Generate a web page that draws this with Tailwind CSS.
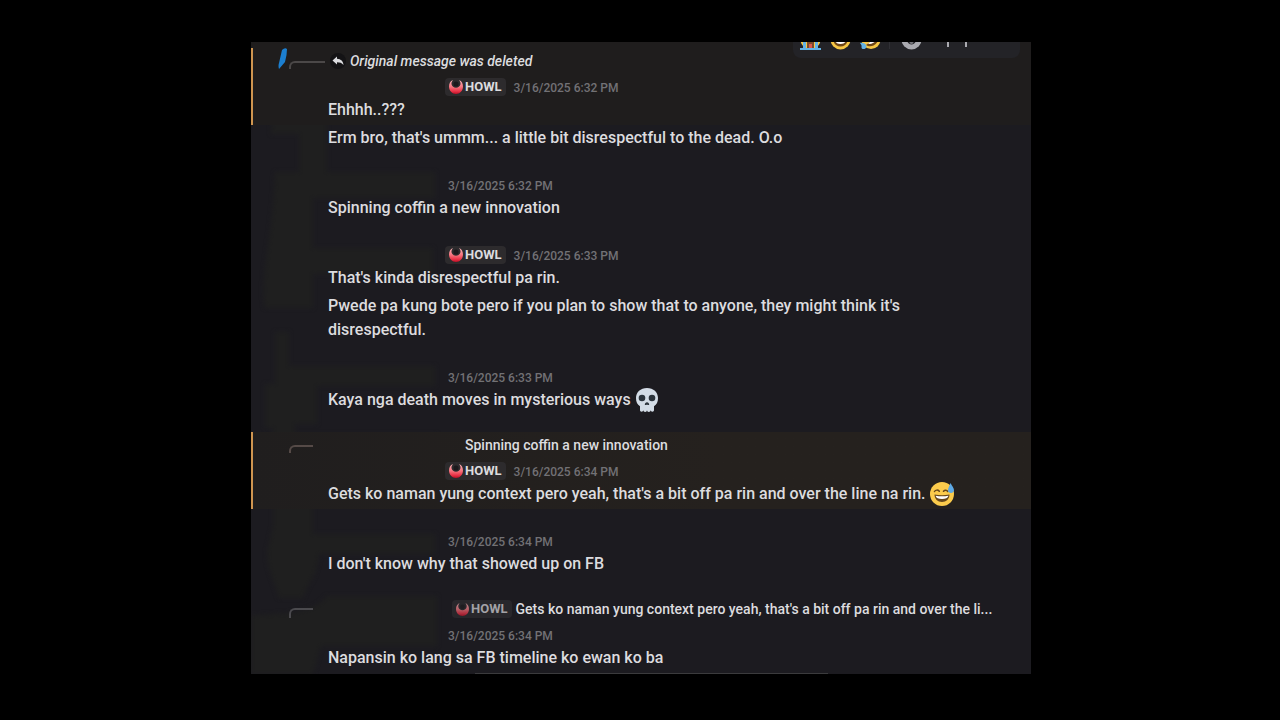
<!DOCTYPE html>
<html lang="en">
<head>
  <meta charset="UTF-8" />
  <meta name="viewport" content="width=device-width, initial-scale=1.0" />
  <title>Chat</title>
  <script src="https://cdn.jsdelivr.net/npm/@tailwindcss/browser@4"></script>
</head>
<body class="bg-black pl-[2px] font-['Roboto','Noto_Sans',sans-serif] text-[#dcdcdf]">

  <!-- Shared icons -->
  <svg class="absolute size-0" aria-hidden="true">
    <defs>
      <linearGradient id="horn" x1="0" y1="0" x2="0" y2="1">
        <stop offset="0" stop-color="#f9b4b8" />
        <stop offset="0.5" stop-color="#f4737d" />
        <stop offset="0.8" stop-color="#ea3347" />
        <stop offset="1" stop-color="#b80f26" />
      </linearGradient>
    </defs>
    <symbol id="tag" viewBox="0 0 14 14">
      <circle cx="7" cy="4" r="2.500" fill="#1b191c" />
      <path fill="url(#horn)" d="M4 0C1.200 1.200 0 3.500 0 6.500 0 10.700 3.200 14 7 14s7-3.300 7-7.500c0-3-1.200-5.300-4-6.500 1.300 1.500 1.800 3 1.400 4.600C10.900 6.500 9.200 7.700 7 7.700S3.100 6.500 2.600 4.600C2.200 3 2.700 1.500 4 0z" />
    </symbol>
  </svg>

  <main class="relative isolate mx-auto mt-[42px] max-w-[780px] overflow-hidden bg-[#1c1b20]">

    <!-- Message actions, partly scrolled out of view -->
    <div class="absolute -top-4 right-[11px] z-30 flex h-8 w-[227px] items-center rounded-lg bg-[#232327] pb-[6px] pl-[7px]">
      <button aria-label="Crying" class="mr-[9px]">
        <svg class="size-[21px]" viewBox="0 0 21 21">
          <circle cx="10.500" cy="10.500" r="10" fill="#f6c644" />
          <path fill="#7b4a2a" d="M7 12h7v7H7z" />
          <path fill="#d9584a" d="M9 15h3v4H9z" />
          <path fill="#63b2e4" d="M3 8h3v13H3zM15 8h3v13h-3zM0 19h21v2H0z" />
        </svg>
      </button>
      <button aria-label="Smile" class="mr-[9px]">
        <svg class="size-[21px]" viewBox="0 0 21 21">
          <circle cx="10.500" cy="10.500" r="10" fill="#f6c644" />
          <path fill="#6b4316" d="M3.500 10.500h14c0 4.500-3 7-7 7s-7-2.500-7-7z" />
          <path fill="#fff" d="M5 11h11c0 2-2 4-5.500 4S5 13 5 11z" />
        </svg>
      </button>
      <button aria-label="Rolling laugh" class="mr-2">
        <svg class="size-[21px]" viewBox="0 0 21 21">
          <circle cx="11" cy="10.500" r="9.500" fill="#f6c644" />
          <path fill="#6b4316" d="M6 16L17.500 8c1.500 4-1 7-4 8.500-2.500 1.200-5.500 1-7.500-.5z" />
          <path fill="#fff" d="M8 14.500L16 9c.5 2.500-1 4-3 5s-3.500 1.300-5 .5z" />
          <path fill="#63b2e4" d="M0 14c2-.5 5 0 6 2s0 4-2.500 4C2 20 1.500 19.500 1.500 18 2 17 1 15 0 14z" />
        </svg>
      </button>
      <span class="mr-[11px] h-5 w-px bg-[#303035]"></span>
      <button aria-label="Add reaction" class="mr-6">
        <svg class="size-[21px]" viewBox="0 0 21 21">
          <circle cx="10.500" cy="10.500" r="10" fill="#aaaab0" />
          <path fill="#232327" d="M6 11h9c-.5 3-2 4.500-4.500 4.500S6.500 14 6 11z" />
          <circle cx="10.500" cy="13" r="2" fill="#77777d" />
        </svg>
      </button>
      <button aria-label="Edit">
        <svg class="size-[22px]" viewBox="0 0 22 22" fill="none" stroke="#aaaab0" stroke-width="2">
          <path d="M2 19V9h18v10" />
        </svg>
      </button>
    </div>

    <!-- Brushed-out avatars and names -->
    <svg class="pointer-events-none absolute inset-0 z-10 h-[632px] w-[200px] blur-[2px]" viewBox="0 0 200 632" fill="#1f1f1f" aria-hidden="true">
      <path d="M24 36h160v18H76v76H48V92H20z" />
      <path d="M24 130h160v26H62v50h120v26H62v34H14c-6-30 8-70 10-136z" />
      <path d="M24 290h14v34h146v20H66v38H44v10h142v50H62v50h122v20H68c-2 24-12 30-16 44H28c-6-20-12-30-12-46l6-26V386H14v-44h10z" />
      <path d="M0 574c30-4 60 0 76-20h110v50H70l-8 28H0z" />
    </svg>

    <ol class="relative z-20 pt-[6px]">
      <li class="border-l-2 border-[#cf9550] bg-[#1f1d1d] pt-[2px] pr-12 pb-[3px] pl-[75px] shadow-[0_-6px_0_#1f1d1d]">
        <div class="-ml-[51px] mb-1 flex h-[22px] items-center text-[14px] font-medium leading-[22px]">
          <svg class="mb-1 h-[22px] w-3" viewBox="0 0 12 22" aria-hidden="true">
            <path d="M5 2q3-3 5-1 0 6-2 13l-6 7q-1-3 0-6z" fill="#1c7fd0" />
          </svg>
          <span class="mt-2 mr-[5px] h-2 w-9 rounded-tl-md border-t-2 border-l-2 border-[#4b4848]"></span>
          <span class="mr-1 flex size-4 items-center justify-center rounded-full bg-[#141315]">
            <svg class="size-3" viewBox="0 0 12 12" fill="#dcdcdf" aria-hidden="true">
              <path d="M5 1.500L.5 5.500 5 9.500V7.200c3 0 4.800.6 6.500 2.800C11.300 6.500 9 4 5 3.800z" />
            </svg>
          </span>
          <em>Original message was deleted</em>
        </div>
        <div class="flex h-[22px] items-center pl-[117px]">
          <span class="mr-2 flex h-[18px] items-center gap-[2px] rounded bg-[#2d2b2d] px-1 text-[13px] font-bold"><svg class="size-[14px]" aria-hidden="true"><use href="#tag" /></svg>HOWL</span>
          <time class="pt-[2px] text-[12px] font-medium text-[#727175]">3/16/2025 6:32 PM</time>
        </div>
        <p class="text-[16px] font-medium leading-6">Ehhhh..???</p>
      </li>
      <li class="pt-px pr-12 pb-[3px] pl-[77px]">
        <p class="text-[16px] font-medium leading-6">Erm bro, that's ummm... a little bit disrespectful to the dead. O.o</p>
      </li>

      <li class="mt-[19px] pt-[2px] pr-12 pb-[3px] pl-[77px]">
        <div class="flex h-[22px] items-center pl-[120px]">
          <time class="pt-[2px] text-[12px] font-medium text-[#727175]">3/16/2025 6:32 PM</time>
        </div>
        <p class="text-[16px] font-medium leading-6">Spinning coffin a new innovation</p>
      </li>

      <li class="mt-[19px] pt-[2px] pr-12 pb-[3px] pl-[77px]">
        <div class="flex h-[22px] items-center pl-[117px]">
          <span class="mr-2 flex h-[18px] items-center gap-[2px] rounded bg-[#2d2b2d] px-1 text-[13px] font-bold"><svg class="size-[14px]" aria-hidden="true"><use href="#tag" /></svg>HOWL</span>
          <time class="pt-[2px] text-[12px] font-medium text-[#727175]">3/16/2025 6:33 PM</time>
        </div>
        <p class="text-[16px] font-medium leading-6">That's kinda disrespectful pa rin.</p>
      </li>
      <li class="pt-px pr-12 pb-[3px] pl-[77px]">
        <p class="text-[16px] font-medium leading-6">Pwede pa kung bote pero if you plan to show that to anyone, they might think it's disrespectful.</p>
      </li>

      <li class="mt-[19px] pt-[2px] pr-12 pb-[3px] pl-[77px]">
        <div class="flex h-[22px] items-center pl-[120px]">
          <time class="pt-[2px] text-[12px] font-medium text-[#727175]">3/16/2025 6:33 PM</time>
        </div>
        <p class="flex min-h-6 items-center gap-1 text-[16px] font-medium leading-6">Kaya nga death moves in mysterious ways
          <svg class="size-6 shrink-0" viewBox="0 0 24 24" role="img" aria-label="skull">
            <path fill="#d3dce6" d="M12 0C5.500 0 1 4.300 1 10c0 4 1.300 6.700 4 8.200V22c0 1 .6 1.700 1.600 1.700S8.300 23 8.300 22c0 1 .8 2 1.900 2s1.800-1 1.800-2c0 1 .7 2 1.800 2s1.900-1 1.900-2c0 1 .7 1.700 1.700 1.700S19 23 19 22v-3.800c2.700-1.500 4-4.200 4-8.200C23 4.300 18.500 0 12 0z" />
            <circle cx="7" cy="10" r="3.300" fill="#2b333b" />
            <circle cx="17" cy="10" r="3.300" fill="#2b333b" />
            <path fill="#2b333b" d="M12 14.300c-1.200 0-2.200 1.300-2.200 2.200 0 .8 1.500.6 2.200 0 .7.6 2.200.8 2.200 0 0-.9-1-2.200-2.200-2.200z" />
          </svg>
        </p>
      </li>

      <li class="mt-[17px] border-l-2 border-[#cf9550] bg-linear-to-r from-[#201e1e] to-[#25211e] to-60% pt-[2px] pr-12 pb-[3px] pl-[75px]">
        <div class="-ml-[39px] mb-1 flex h-[22px] items-center text-[14px] font-medium leading-[22px]">
          <span class="mt-2 h-2 w-6 rounded-tl-md border-t-2 border-l-2 border-[#554a47]"></span>
          <span class="pl-[152px]">Spinning coffin a new innovation</span>
        </div>
        <div class="flex h-[22px] items-center pl-[117px]">
          <span class="mr-2 flex h-[18px] items-center gap-[2px] rounded bg-[#2d2b2d] px-1 text-[13px] font-bold"><svg class="size-[14px]" aria-hidden="true"><use href="#tag" /></svg>HOWL</span>
          <time class="pt-[2px] text-[12px] font-medium text-[#727175]">3/16/2025 6:34 PM</time>
        </div>
        <p class="flex min-h-6 items-center gap-1 text-[16px] font-medium leading-6">Gets ko naman yung context pero yeah, that's a bit off pa rin and over the line na rin.
          <svg class="size-6 shrink-0" viewBox="0 0 24 24" role="img" aria-label="sweat smile">
            <circle cx="12" cy="12" r="12" fill="#fbcb4c" />
            <path fill="none" stroke="#65471b" stroke-width="1.500" stroke-linecap="round" stroke-linejoin="round" d="M4.500 9.500c1-1.800 3.500-1.800 4.800-.2M13.500 9.300c1.300-1.600 3.300-1.400 4.300.2" />
            <path fill="#65471b" d="M4.500 12.500c5 1 10 1 15 0 0 4.500-3.200 7.500-7.500 7.500s-7.500-3-7.500-7.500z" />
            <path fill="#fff" d="M5.500 13.700c4.500.7 8.500.7 13 0-.7 2.200-3 3.200-6.500 3.200s-5.800-1-6.500-3.200z" />
            <path fill="#5da9e5" d="M20.500 1c-1 3-2.500 5-2.500 7.300C18 10 19.200 11 20.900 11S24 9.800 24 8.300C24 5.800 21.800 4 20.500 1z" />
          </svg>
        </p>
      </li>

      <li class="mt-[19px] pt-[2px] pr-12 pb-[3px] pl-[77px]">
        <div class="flex h-[22px] items-center pl-[120px]">
          <time class="pt-[2px] text-[12px] font-medium text-[#727175]">3/16/2025 6:34 PM</time>
        </div>
        <p class="text-[16px] font-medium leading-6">I don't know why that showed up on FB</p>
      </li>

      <li class="mt-[17px] pt-[2px] pr-5 pb-[3px] pl-[77px]">
        <div class="-ml-[39px] mb-1 flex h-[22px] items-center text-[14px] font-medium leading-[22px]">
          <span class="mt-2 h-[10px] w-6 shrink-0 rounded-tl-md border-t-2 border-l-2 border-[#4b4a4e]"></span>
          <span class="mr-1 ml-[139px] flex h-[18px] items-center gap-[2px] rounded bg-[#28272b] px-1 text-[13px] font-bold text-[#a3a2a6]"><svg class="size-[13px] opacity-70" aria-hidden="true"><use href="#tag" /></svg>HOWL</span>
          <span class="whitespace-nowrap">Gets ko naman yung context pero yeah, that's a bit off pa rin and over the li...</span>
        </div>
        <div class="flex h-[22px] items-center pl-[120px]">
          <time class="pt-[2px] text-[12px] font-medium text-[#727175]">3/16/2025 6:34 PM</time>
        </div>
        <p class="text-[16px] font-medium leading-6">Napansin ko lang sa FB timeline ko ewan ko ba</p>
      </li>
    </ol>
    <div class="mr-[203px] ml-[224px] h-px bg-[#3b3b3d]"></div>
  </main>
</body>
</html>
